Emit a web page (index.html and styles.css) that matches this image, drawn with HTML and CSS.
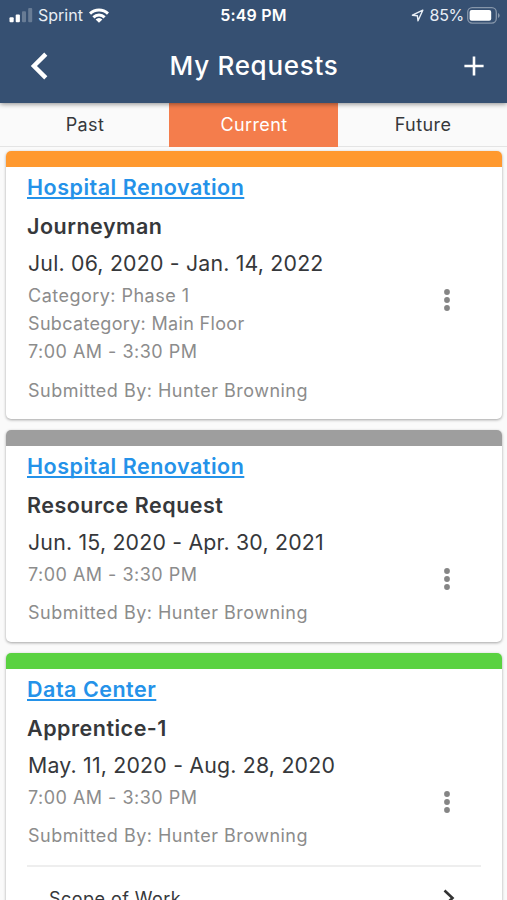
FILE: index.html
```html
<!DOCTYPE html>
<html lang="en">
<head>
<meta charset="utf-8">
<title>My Requests</title>
<link rel="stylesheet" href="styles.css">
</head>
<body>
<header class="header">
  <div class="status">
    <div class="status-left">
      <svg class="signal" width="24" height="16" viewBox="0 0 24 16" fill="#fff"><rect x="0.5" y="10.3" width="4.2" height="5" rx="1"/><rect x="6.7" y="7.5" width="4.2" height="7.8" rx="1"/><rect x="13" y="4.2" width="4" height="11" rx="1" opacity=".25"/><rect x="19.2" y="1" width="4" height="14.2" rx="1" opacity=".25"/></svg>
      <span class="carrier">Sprint</span>
      <svg class="wifi" width="20" height="15" viewBox="0 0 20 15" fill="none" stroke="#fff" stroke-width="3"><path d="M1 5.6A13 13 0 0 1 19 5.6"/><path d="M4.4 9.4A8 8 0 0 1 15.6 9.4"/><path d="M10 14.8 6.6 11.5A4.6 4.6 0 0 1 13.4 11.5Z" fill="#fff" stroke="none"/></svg>
    </div>
    <span class="clock">5:49 PM</span>
    <div class="status-right">
      <svg class="location" width="13" height="13" viewBox="0 0 13 13" fill="none" stroke="#e8eef5" stroke-width="1.4" stroke-linejoin="round"><path d="M11.8 1.2 1.4 6.2 6.4 6.8 7 11.8Z"/></svg>
      <span class="percent">85%</span>
      <svg class="battery" width="33" height="17" viewBox="0 0 33 17"><rect x=".7" y=".7" width="28.6" height="15.4" rx="4.5" fill="none" stroke="#fff" stroke-opacity=".4" stroke-width="1.3"/><rect x="2.6" y="3" width="21.6" height="10.8" rx="2" fill="#fff"/><path d="M31 6v5a2.7 2.7 0 0 0 0-5Z" fill="#fff" opacity=".4"/></svg>
    </div>
  </div>
  <div class="nav">
    <svg class="back" width="18" height="28" viewBox="0 0 18 28" fill="none" stroke="#fff" stroke-width="4.4"><path d="M15.8 2.1 3.9 14l11.9 11.9"/></svg>
    <h1 class="nav-title">My Requests</h1>
    <svg class="add" width="20" height="20" viewBox="0 0 20 20" stroke="#fff" stroke-width="2.6"><path d="M10 .4v19.2M.4 10h19.2"/></svg>
  </div>
</header>
<nav class="tabs">
  <span class="tab">Past</span>
  <span class="tab tab-active">Current</span>
  <span class="tab">Future</span>
</nav>
<main class="list">
  <article class="card">
    <div class="bar bar-orange"></div>
    <div class="body">
      <div class="info">
        <a class="project">Hospital Renovation</a>
        <h2 class="role">Journeyman</h2>
        <p class="dates">Jul. 06, 2020 - Jan. 14, 2022</p>
        <p class="meta">Category: Phase 1</p>
        <p class="meta subcategory">Subcategory: Main Floor</p>
        <p class="meta">7:00 AM - 3:30 PM</p>
        <p class="meta submitted">Submitted By: Hunter Browning</p>
      </div>
      <svg class="more" width="8" height="24" viewBox="0 0 8 24" fill="#858585"><circle cx="4" cy="4" r="2.9"/><circle cx="4" cy="12" r="2.9"/><circle cx="4" cy="20" r="2.9"/></svg>
    </div>
  </article>
  <article class="card">
    <div class="bar bar-gray"></div>
    <div class="body">
      <div class="info">
        <a class="project">Hospital Renovation</a>
        <h2 class="role">Resource Request</h2>
        <p class="dates">Jun. 15, 2020 - Apr. 30, 2021</p>
        <p class="meta">7:00 AM - 3:30 PM</p>
        <p class="meta submitted">Submitted By: Hunter Browning</p>
      </div>
      <svg class="more" width="8" height="24" viewBox="0 0 8 24" fill="#858585"><circle cx="4" cy="4" r="2.9"/><circle cx="4" cy="12" r="2.9"/><circle cx="4" cy="20" r="2.9"/></svg>
    </div>
  </article>
  <article class="card">
    <div class="bar bar-green"></div>
    <div class="body">
      <div class="info">
        <a class="project">Data Center</a>
        <h2 class="role">Apprentice-1</h2>
        <p class="dates">May. 11, 2020 - Aug. 28, 2020</p>
        <p class="meta">7:00 AM - 3:30 PM</p>
        <p class="meta submitted">Submitted By: Hunter Browning</p>
      </div>
      <svg class="more" width="8" height="24" viewBox="0 0 8 24" fill="#858585"><circle cx="4" cy="4" r="2.9"/><circle cx="4" cy="12" r="2.9"/><circle cx="4" cy="20" r="2.9"/></svg>
    </div>
    <div class="scope">
      <span>Scope of Work</span>
      <svg width="12" height="18" viewBox="0 0 12 18" fill="none" stroke="#333" stroke-width="2.6"><path d="M1.5 1.5 9.5 9l-8 7.5"/></svg>
    </div>
  </article>
</main>
</body>
</html>
```
FILE: styles.css
```css
* { box-sizing: border-box; }
body {
  margin: 0;
  height: 900px;
  overflow: hidden;
  background: #fafafa;
  font-family: Inter, "Liberation Sans", sans-serif;
  color: #36383b;
}
h1, h2, p { margin: 0; }
svg { display: block; flex: none; }
.header {
  position: relative;
  height: 103px;
  background: #365072;
  color: #fff;
  box-shadow: 0 1px 5px rgba(0, 0, 0, .45);
}
.status {
  display: grid;
  grid-template-columns: 1fr auto 1fr;
  align-items: center;
  height: 30px;
  padding: 0 7px 0 9px;
}
.status-left, .status-right { display: flex; align-items: center; }
.status-right { justify-content: flex-end; }
.carrier { margin-left: 5px; font-size: 16px; letter-spacing: 0; color: #e8eef5; }
.signal { margin-bottom: 1px; }
.wifi { margin-left: 6px; }
.clock { margin-right: 2px; font-size: 16px; font-weight: 600; letter-spacing: .2px; }
.percent { margin: 0 3px 0 6px; font-size: 16px; letter-spacing: -.3px; color: #e8eef5; }
.nav {
  display: flex;
  align-items: center;
  justify-content: space-between;
  height: 73px;
  padding: 0 23px 2px 30px;
}
.nav-title { margin-right: 4px; font-size: 26px; font-weight: 500; letter-spacing: .7px; }
.tabs {
  display: grid;
  grid-template-columns: repeat(3, 1fr);
  height: 44px;
  border-bottom: 1px solid #e4e4e4;
}
.tab { padding-left: 1px; text-align: center; font-size: 18px; line-height: 44px; letter-spacing: .4px; }
.tab-active { background: #f47d4c; color: #fff; }
.list { display: flex; flex-direction: column; gap: 11px; padding: 4px 5px 0 6px; }
.card {
  flex: none;
  overflow: hidden;
  border-radius: 5px;
  background: #fff;
  box-shadow: 0 1px 3px rgba(0, 0, 0, .35);
}
.bar { height: 16px; }
.bar-orange { background: #ff992f; }
.bar-gray { background: #9e9e9e; }
.bar-green { background: #5ad241; }
.body {
  display: flex;
  align-items: flex-start;
  justify-content: space-between;
  padding: 0 51px 14.4px 21px;
}
.more { margin-top: 121px; }
.project {
  display: block;
  width: fit-content;
  font-size: 21.5px;
  font-weight: 600;
  line-height: 40px;
  letter-spacing: .51px;
  color: #2492e9;
  text-decoration: underline;
  text-decoration-thickness: 2px;
  text-underline-offset: 2px;
  text-decoration-skip-ink: none;
}
.role { font-size: 21.5px; font-weight: 600; line-height: 38px; letter-spacing: .5px; }
.dates { padding-left: 1px; font-size: 21.3px; line-height: 36.6px; letter-spacing: .2px; }
.meta { padding-left: 1px; font-size: 18px; line-height: 28.2px; letter-spacing: .48px; color: #8c8c8c; }
.subcategory { letter-spacing: .33px; }
.submitted { margin-top: 10.4px; }
.scope {
  display: flex;
  align-items: center;
  justify-content: space-between;
  height: 65px;
  margin: 0 21px;
  padding: 0 26px 0 22px;
  border-top: 2px solid #eee;
  font-size: 18px;
  letter-spacing: .45px;
}
```
